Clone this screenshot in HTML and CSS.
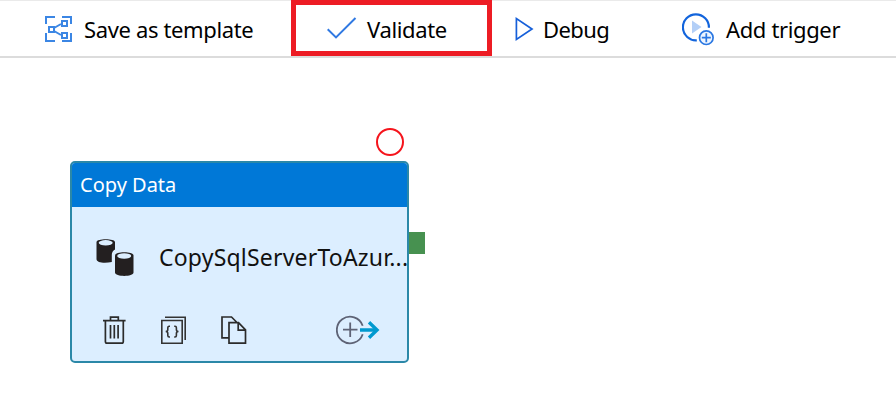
FILE: index.html
```html
<!DOCTYPE html>
<html lang="en">
<head>
<meta charset="utf-8">
<title>Pipeline designer</title>
<link rel="stylesheet" href="styles.css">
</head>
<body>
<nav class="toolbar">
  <button class="command save">
    <svg width="28" height="28" viewBox="0 0 28 28" fill="none" stroke="#3b86e4" stroke-width="2">
      <path d="M2 9V2H11M18 2H27V9M2 18V26H11M18 26H27V18"/>
      <path d="M10 13L17 9M10 16L17 20"/>
      <path d="M5 12H10V17H5ZM18 6H23V11H18ZM18 18H23V23H18Z"/>
    </svg>
    <span class="label">Save as template</span>
  </button>
  <button class="command validate">
    <svg width="30" height="24" viewBox="0 0 30 24" fill="none" stroke="#3079e2" stroke-width="2">
      <path d="M.7 13.2L9 21.4L28.5 2"/>
    </svg>
    <span class="label">Validate</span>
  </button>
  <button class="command debug">
    <svg width="20" height="26" viewBox="0 0 20 26" fill="none" stroke="#165fd9" stroke-width="1.7">
      <path d="M1.4 2.6V23.4L17 13Z"/>
    </svg>
    <span class="label">Debug</span>
  </button>
  <button class="command trigger">
    <svg width="34" height="34" viewBox="0 0 34 34" fill="none">
      <path d="M14.8 28.3A13 13 0 1 1 26.9 15.7" stroke="#1264dc" stroke-width="2.2"/>
      <path d="M10 8.5V21.5L19.5 15Z" fill="#b3cff7"/>
      <circle cx="24.3" cy="25.7" r="6.8" fill="#edf5ff" stroke="#2a77e2" stroke-width="1.7"/>
      <path d="M19.8 25.7H28.8M24.3 21.2V30.2" stroke="#2a77e2" stroke-width="1.7"/>
    </svg>
    <span class="label">Add trigger</span>
  </button>
</nav>
<main class="canvas">
  <span class="breakpoint"></span>
  <span class="port"></span>
  <section class="activity">
    <header class="type">Copy Data</header>
    <div class="summary">
      <svg width="38" height="39" viewBox="0 0 38 39">
        <path d="M.5 4C.5 .2 19 .2 19 4V11.5Q15.8 13 15.8 17V24C9 25.5 .5 25 .5 21Z" fill="#231f20"/>
        <ellipse cx="9.7" cy="4.8" rx="7" ry="2.7" fill="#dceeff"/>
        <path d="M19 17.5C19 13.3 37.5 13.3 37.5 17.5V34.5C37.5 39 19 39 19 34.5Z" fill="#231f20"/>
        <ellipse cx="28.2" cy="18" rx="7" ry="2.7" fill="#dceeff"/>
      </svg>
      <span class="name">CopySqlServerToAzur...</span>
    </div>
    <footer class="actions">
      <svg width="24" height="30" viewBox="0 0 24 30" fill="none" stroke="#2b2b2b" stroke-width="1.7">
        <path d="M0 5.6H22.6M7.5 5V2.1H15.3V5M2.4 6V26.5Q2.4 28.2 4.1 28.2H18.6Q20.3 28.2 20.3 26.5V6M7.5 10V23.5M11.3 10V23.5M15.1 10V23.5"/>
      </svg>
      <svg width="26" height="30" viewBox="0 0 26 30" fill="none" stroke="#333" stroke-width="1.6">
        <path d="M.8 5.5H21.2V28.2H.8ZM4 2.2H24.2V25"/>
        <path d="M9 11.2H8.2Q6.8 11.2 6.8 12.7V14.5Q6.8 16.5 4.7 16.5Q6.8 16.5 6.8 18.5V20.5Q6.8 22 8.2 22H9M13.2 11.2H14Q15.4 11.2 15.4 12.7V14.5Q15.4 16.5 17.5 16.5Q15.4 16.5 15.4 18.5V20.5Q15.4 22 14 22H13.2"/>
      </svg>
      <svg width="27" height="30" viewBox="0 0 27 30" fill="none" stroke="#2b2b2b" stroke-width="1.7">
        <path d="M8 22.8H1V2H10.5L15.5 7M8 7.7H17.5L24.5 14.8V28.2H8ZM17.2 8V15.2H24.5"/>
      </svg>
      <svg class="output" width="44" height="30" viewBox="0 0 44 30" fill="none">
        <path d="M26.7 10.7A13.3 13.3 0 1 0 26.7 19.3M7 14.7H21.5M14.2 7.5V22" stroke="#5e6376" stroke-width="1.8"/>
        <path d="M24 15H41" stroke="#0099cf" stroke-width="3.4"/>
        <path d="M33 7.3L41 15L33 22.7" stroke="#0099cf" stroke-width="3.4"/>
      </svg>
    </footer>
  </section>
</main>
</body>
</html>
```

FILE: styles.css
```css
* { box-sizing: border-box; }
body {
  margin: 0;
  height: 401px;
  overflow: hidden;
  background: #fff;
  color: #000;
  font-family: "Noto Sans", "Open Sans", sans-serif;
}
svg { display: block; flex: none; }
.toolbar {
  display: flex;
  height: 58px;
  border-top: 1px solid #eaeaea;
  border-bottom: 2px solid #dcdcdc;
}
.command {
  display: flex;
  align-items: center;
  padding: 0;
  border: 0;
  background: none;
  color: inherit;
  font: inherit;
  height: 55px;
}
.label {
  font-size: 22px;
  line-height: 30px;
  letter-spacing: -0.36px;
  white-space: nowrap;
}
.save { width: 291px; padding-left: 44px; gap: 12px; }
.validate {
  width: 201px;
  height: 56px;
  margin-top: -1px;
  padding-left: 31px;
  gap: 10px;
  border: 5px solid #ed1c24;
}
.validate .label { padding-top: 2px; }
.debug { width: 190px; padding-left: 23px; gap: 8px; }
.debug .label { letter-spacing: -0.6px; }
.trigger { gap: 10px; }
.canvas { position: relative; height: 343px; }
.activity {
  position: absolute;
  left: 70px;
  top: 103px;
  width: 339px;
  height: 202px;
  border: 2px solid #2b88a8;
  border-radius: 5px;
  background: #dceeff;
  overflow: hidden;
}
.type {
  height: 44px;
  padding-left: 8px;
  background: #0078d7;
  color: #fff;
  font-size: 20px;
  line-height: 43px;
}
.summary {
  display: flex;
  align-items: center;
  height: 101px;
  padding-left: 24px;
  gap: 25px;
}
.summary .name {
  color: #111;
  font-size: 23px;
  line-height: 30px;
  letter-spacing: 0.2px;
  margin-top: -2px;
  white-space: nowrap;
}
.actions {
  display: flex;
  gap: 34px;
  padding: 7px 0 0 31px;
}
.output { margin-left: 54px; }
.breakpoint {
  position: absolute;
  left: 376px;
  top: 70px;
  width: 28px;
  height: 28px;
  border: 2px solid #f5141c;
  border-radius: 50%;
}
.port {
  position: absolute;
  left: 408px;
  top: 174px;
  width: 17px;
  height: 22px;
  background: #479150;
}
```
